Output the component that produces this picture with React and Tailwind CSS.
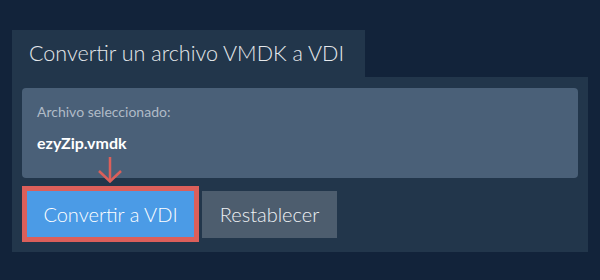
export default function App() {
  return (
    <div
      className="w-[600px] h-[280px] bg-[#12233a] pt-[30px] px-[12px]"
      style={{ fontFamily: "Lato, 'Noto Sans', sans-serif" }}
    >
      {/* tab */}
      <div className="w-[353px] h-[47px] bg-[#22364b] pl-[17px] flex items-center">
        <span className="text-[21.5px] text-[#e6e9ec] font-light">
          Convertir un archivo VMDK a VDI
        </span>
      </div>

      {/* panel */}
      <div className="w-[576px] h-[175px] bg-[#22364b] pt-[11px] px-[10px]">
        <div className="h-[90px] rounded-[4px] bg-[#4a6078] px-[15px] pt-[16px]">
          <p className="text-[14px] text-[#b0bbc7] leading-[16px]">
            Archivo seleccionado:
          </p>
          <p className="mt-[14px] text-[16px] font-bold text-white leading-[18px]">
            ezyZip.vmdk
          </p>
        </div>

        <div className="relative flex items-center gap-[3px] mt-[8px]">
          {/* arrow */}
          <svg
            className="absolute left-[75px] top-[-29px]"
            width="26"
            height="26"
            viewBox="0 0 26 26"
          >
            <path
              d="M13 0 V24 M2 14 L13 24.5 L24 14"
              fill="none"
              stroke="#dc5f5a"
              strokeWidth="2.5"
            />
          </svg>
          <div className="border-[5px] border-[#dc5f5a]">
            <button className="w-[167px] h-[46px] bg-[#4b9be6] text-white text-[20px] font-light">
              Convertir a VDI
            </button>
          </div>
          <button className="w-[135px] h-[47px] bg-[#4d5d6e] text-[#eef1f4] text-[20px] font-light">
            Restablecer
          </button>
        </div>
      </div>
    </div>
  );
}
